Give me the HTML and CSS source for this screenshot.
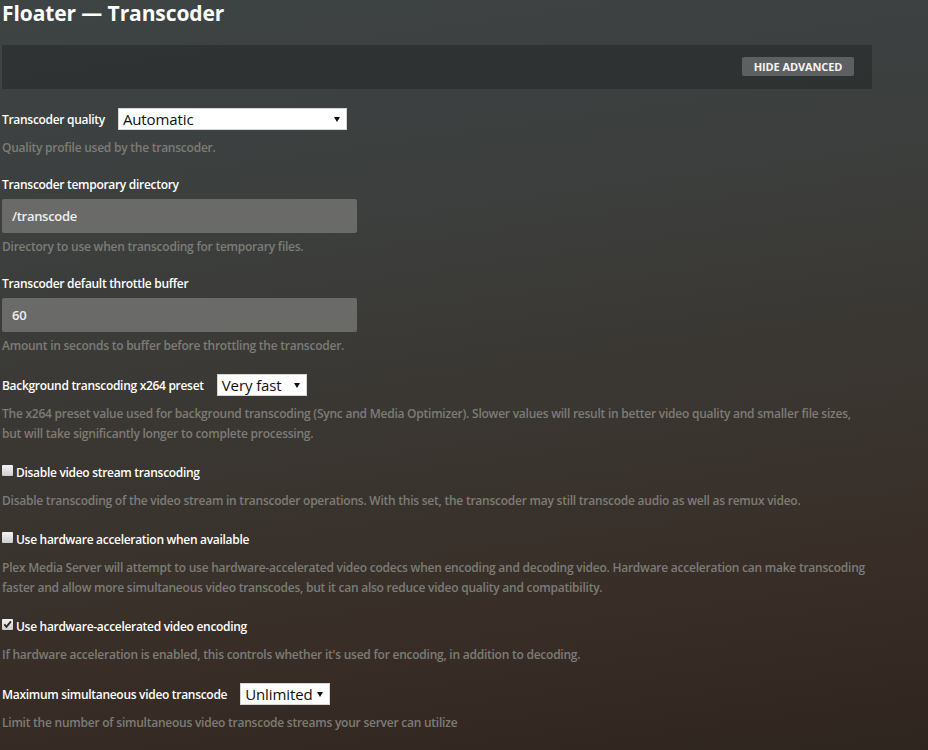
FILE: index.html
```html
<!DOCTYPE html>
<html lang="en">
<head>
<meta charset="utf-8">
<title>Floater — Transcoder</title>
<link rel="stylesheet" href="styles.css">
</head>
<body>
<main class="page">
  <h1 class="title">Floater — Transcoder</h1>

  <div class="advanced-bar">
    <button class="btn-advanced" type="button">HIDE ADVANCED</button>
  </div>

  <section class="settings">
    <div class="setting">
      <div class="inline-row">
        <label class="label">Transcoder quality</label>
        <span class="select select-wide"><span class="select-value">Automatic</span><span class="caret"></span></span>
      </div>
      <p class="help">Quality profile used by the transcoder.</p>
    </div>

    <div class="setting">
      <label class="label block">Transcoder temporary directory</label>
      <div class="text-input">/transcode</div>
      <p class="help">Directory to use when transcoding for temporary files.</p>
    </div>

    <div class="setting">
      <label class="label block">Transcoder default throttle buffer</label>
      <div class="text-input">60</div>
      <p class="help">Amount in seconds to buffer before throttling the transcoder.</p>
    </div>

    <div class="setting">
      <div class="inline-row">
        <label class="label">Background transcoding x264 preset</label>
        <span class="select select-short"><span class="select-value">Very fast</span><span class="caret"></span></span>
      </div>
      <p class="help">The x264 preset value used for background transcoding (Sync and Media Optimizer). Slower values will result in better video quality and smaller file sizes, but will take significantly longer to complete processing.</p>
    </div>

    <div class="setting">
      <div class="check-row">
        <span class="checkbox"></span>
        <label class="label">Disable video stream transcoding</label>
      </div>
      <p class="help">Disable transcoding of the video stream in transcoder operations. With this set, the transcoder may still transcode audio as well as remux video.</p>
    </div>

    <div class="setting">
      <div class="check-row">
        <span class="checkbox"></span>
        <label class="label">Use hardware acceleration when available</label>
      </div>
      <p class="help">Plex Media Server will attempt to use hardware-accelerated video codecs when encoding and decoding video. Hardware acceleration can make transcoding faster and allow more simultaneous video transcodes, but it can also reduce video quality and compatibility.</p>
    </div>

    <div class="setting">
      <div class="check-row">
        <span class="checkbox"><svg viewBox="0 0 11 11" width="11" height="11"><path d="M2.3 5.4 L4.5 7.9 L8.9 2.4" fill="none" stroke="#2a2a2a" stroke-width="1.8"/></svg></span>
        <label class="label">Use hardware-accelerated video encoding</label>
      </div>
      <p class="help">If hardware acceleration is enabled, this controls whether it's used for encoding, in addition to decoding.</p>
    </div>

    <div class="setting">
      <div class="inline-row">
        <label class="label">Maximum simultaneous video transcode</label>
        <span class="select select-short"><span class="select-value">Unlimited</span><span class="caret"></span></span>
      </div>
      <p class="help">Limit the number of simultaneous video transcode streams your server can utilize</p>
    </div>
  </section>
</main>
</body>
</html>
```

FILE: styles.css
```css
* {
  box-sizing: border-box;
}

html, body {
  height: 100%;
}

body {
  margin: 0;
  font-family: "Open Sans", "Noto Sans", sans-serif;
  color: #eeeeee;
  background: linear-gradient(172deg, #3e4344 0%, #3c3f3e 28%, #3a3631 55%, #382d26 80%, #2f251f 100%);
  overflow: hidden;
}

.page {
  padding: 0 56px 0 2px;
}

.title {
  margin: 0;
  font-size: 21px;
  font-weight: 700;
  line-height: 26px;
  color: #ffffff;
  letter-spacing: -0.1px;
}

/* darker strip holding the advanced toggle */
.advanced-bar {
  margin-top: 19px;
  height: 44px;
  background: rgba(28, 31, 31, 0.42);
  display: flex;
  align-items: center;
  justify-content: flex-end;
  padding-right: 18px;
}

.btn-advanced {
  border: 0;
  border-radius: 2px;
  background: #5c6060;
  color: #f4f4f4;
  font-family: inherit;
  font-size: 11px;
  font-weight: 700;
  height: 19px;
  width: 112px;
  padding: 0;
  margin-top: -2px;
  letter-spacing: -0.1px;
}

.settings {
  display: flex;
  flex-direction: column;
  gap: 18px;
  margin-top: 19px;
}

.label {
  font-size: 12px;
  font-weight: 600;
  color: #ffffff;
  letter-spacing: -0.3px;
}

.label.block {
  display: block;
  line-height: 18px;
}

.help {
  margin: 0;
  font-size: 12px;
  font-weight: 600;
  line-height: 20px;
  color: #7d7c77;
  letter-spacing: -0.24px;
}

.inline-row {
  display: flex;
  align-items: center;
  gap: 13px;
  height: 22px;
}

.inline-row + .help {
  margin-top: 8px;
}

/* dropdowns drawn as plain white boxes with a small caret */
.select {
  display: inline-flex;
  align-items: center;
  justify-content: space-between;
  height: 22px;
  background: #ffffff;
  border: 1px solid #d6d6d6;
  color: #111111;
  font-size: 15px;
  padding: 0 6px 0 4px;
}

.select-value {
  line-height: 20px;
  letter-spacing: -0.1px;
}

.caret {
  width: 0;
  height: 0;
  border-left: 3px solid transparent;
  border-right: 3px solid transparent;
  border-top: 5px solid #111111;
}

.select-wide {
  width: 229px;
}

.select-short {
  width: 90px;
}

.text-input {
  width: 355px;
  height: 34px;
  margin-top: 5px;
  background: #6a6b69;
  border-radius: 2px;
  color: #efefef;
  font-size: 13px;
  font-weight: 600;
  line-height: 34px;
  padding-left: 10px;
  letter-spacing: -0.3px;
}

.text-input + .help {
  margin-top: 4px;
}

.check-row {
  display: flex;
  align-items: center;
  gap: 3px;
  height: 20px;
}

.check-row + .help {
  margin-top: 9px;
}

.checkbox {
  width: 11px;
  height: 11px;
  flex: none;
  background: linear-gradient(#f4f4f4, #cdcdcd);
  border-radius: 1px;
  display: inline-flex;
  margin-top: -3px;
}
```
